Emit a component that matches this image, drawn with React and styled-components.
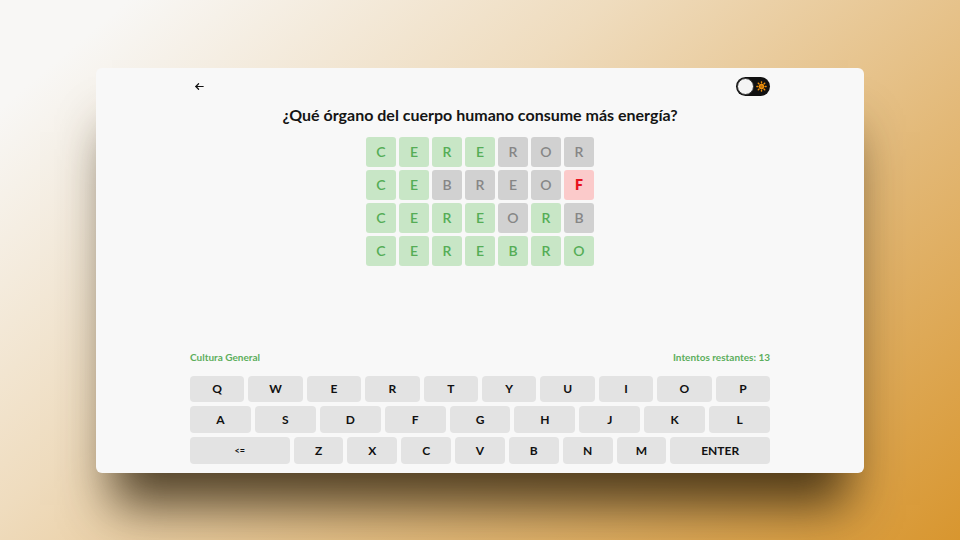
import React from "react"
import styled, { createGlobalStyle } from "styled-components"

const GlobalStyle = createGlobalStyle`
  html, body {
    margin: 0;
    padding: 0;
  }
  body {
    font-family: "Lato", "Open Sans", sans-serif;
    background: linear-gradient(140deg, #f8f7f5 8%, #efdcbe 38%, #e3b978 68%, #d8962f 100%);
    min-height: 100vh;
  }
`

const Stage = styled.div`
  min-height: 100vh;
  display: flex;
  align-items: center;
  justify-content: center;
`

const Card = styled.main`
  width: 768px;
  height: 405px;
  box-sizing: border-box;
  background: #f8f8f8;
  border-radius: 6px;
  padding: 9px 94px 9px;
  display: flex;
  flex-direction: column;
  box-shadow: 0 48px 48px -16px rgba(45, 32, 10, 0.82);
`

const Header = styled.header`
  height: 20px;
  display: flex;
  align-items: center;
  justify-content: space-between;
`

const BackButton = styled.button`
  border: none;
  background: none;
  padding: 0 0 0 4px;
  display: flex;
  align-items: center;
  cursor: pointer;
  color: #111;
`

const Toggle = styled.div`
  width: 34px;
  height: 19px;
  box-sizing: border-box;
  border-radius: 10px;
  background: #111;
  position: relative;
  display: flex;
  align-items: center;
  justify-content: flex-end;
  padding-right: 3px;
`

const Knob = styled.span`
  position: absolute;
  left: 1px;
  top: 1px;
  width: 17px;
  height: 17px;
  box-sizing: border-box;
  border-radius: 50%;
  background: #f4f4f4;
  border: 1px solid #333;
`

const Question = styled.h1`
  margin: 8px 0 0;
  text-align: center;
  font-size: 16px;
  line-height: 20px;
  font-weight: 700;
  color: #151515;
`

const Board = styled.div`
  margin: 12px auto 0;
  display: grid;
  grid-template-columns: repeat(7, 30px);
  grid-auto-rows: 30px;
  gap: 3px;
`

const tileColors = {
  ok: { bg: "#c8e6c6", fg: "#55ad56" },
  miss: { bg: "#d1d1d1", fg: "#868686" },
  bad: { bg: "#fbcaca", fg: "#e8121d" },
}

const Tile = styled.div`
  border-radius: 3px;
  display: flex;
  align-items: center;
  justify-content: center;
  font-size: 14px;
  font-weight: ${(p) => (p.$state === "bad" ? 800 : 600)};
  background: ${(p) => tileColors[p.$state].bg};
  color: ${(p) => tileColors[p.$state].fg};
`

const Spacer = styled.div`
  flex: 1;
`

const InfoRow = styled.div`
  display: flex;
  justify-content: space-between;
  font-size: 10px;
  font-weight: 700;
  color: #5cae5c;
  margin-bottom: 13px;
`

const Keyboard = styled.div`
  display: flex;
  flex-direction: column;
  gap: 4px;
`

const KeyRow = styled.div`
  display: flex;
  gap: 4px;
  height: ${(p) => p.$h}px;
`

const Key = styled.button`
  flex: ${(p) => (p.$wide ? 2 : 1)};
  border: none;
  border-radius: 4px;
  background: #e3e3e3;
  font-family: inherit;
  font-size: ${(p) => (p.$small ? 9 : 12)}px;
  font-weight: 700;
  color: #111;
  padding: 0;
  cursor: pointer;
`

const rows = [
  ["C", "ok", "E", "ok", "R", "ok", "E", "ok", "R", "miss", "O", "miss", "R", "miss"],
  ["C", "ok", "E", "ok", "B", "miss", "R", "miss", "E", "miss", "O", "miss", "F", "bad"],
  ["C", "ok", "E", "ok", "R", "ok", "E", "ok", "O", "miss", "R", "ok", "B", "miss"],
  ["C", "ok", "E", "ok", "R", "ok", "E", "ok", "B", "ok", "R", "ok", "O", "ok"],
]

const keys = [
  ["Q", "W", "E", "R", "T", "Y", "U", "I", "O", "P"],
  ["A", "S", "D", "F", "G", "H", "J", "K", "L"],
  ["<=", "Z", "X", "C", "V", "B", "N", "M", "ENTER"],
]

const SunIcon = () => (
  <svg width="11" height="11" viewBox="0 0 24 24" fill="#f0900a">
    <circle cx="12" cy="12" r="6" />
    {[0, 45, 90, 135, 180, 225, 270, 315].map((a) => (
      <rect key={a} x="10.5" y="0.5" width="3" height="5" rx="1" transform={`rotate(${a} 12 12)`} />
    ))}
    <circle cx="12" cy="12" r="3" fill="#111" opacity="0.25" />
  </svg>
)

const App = () => {
  return (
    <>
      <GlobalStyle />
      <Stage>
        <Card>
          <Header>
            <BackButton aria-label="Volver">
              <svg width="11" height="11" viewBox="0 0 24 24" fill="none" stroke="#111" strokeWidth="2.6" strokeLinecap="round" strokeLinejoin="round">
                <path d="M20 12H4" />
                <path d="M10 6l-6 6 6 6" />
              </svg>
            </BackButton>
            <Toggle>
              <Knob />
              <SunIcon />
            </Toggle>
          </Header>
          <Question>¿Qué órgano del cuerpo humano consume más energía?</Question>
          <Board>
            {rows.map((row, r) =>
              Array.from({ length: 7 }).map((_, i) => (
                <Tile key={`${r}-${i}`} $state={row[i * 2 + 1]}>
                  {row[i * 2]}
                </Tile>
              ))
            )}
          </Board>
          <Spacer />
          <InfoRow>
            <span>Cultura General</span>
            <span>Intentos restantes: 13</span>
          </InfoRow>
          <Keyboard>
            {keys.map((row, r) => (
              <KeyRow key={r} $h={r === 0 ? 26 : 27}>
                {row.map((k) => (
                  <Key key={k} $wide={k === "<=" || k === "ENTER"} $small={k === "<="}>
                    {k}
                  </Key>
                ))}
              </KeyRow>
            ))}
          </Keyboard>
        </Card>
      </Stage>
    </>
  )
}

export default App
